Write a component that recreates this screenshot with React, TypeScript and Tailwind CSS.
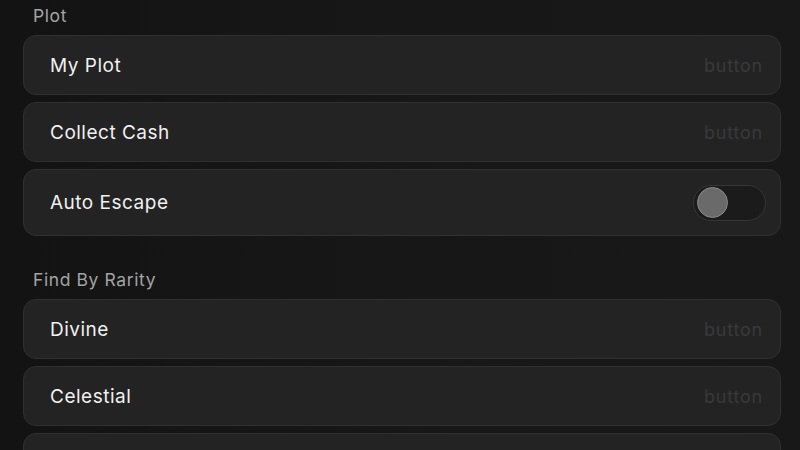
import { type FC } from 'react';

type Row = {
    label: string;
    kind: 'button' | 'toggle';
};

const sections: { title: string; rows: Row[] }[] = [
    {
        title: 'Plot',
        rows: [
            { label: 'My Plot', kind: 'button' },
            { label: 'Collect Cash', kind: 'button' },
            { label: 'Auto Escape', kind: 'toggle' },
        ],
    },
    {
        title: 'Find By Rarity',
        rows: [
            { label: 'Divine', kind: 'button' },
            { label: 'Celestial', kind: 'button' },
            { label: '', kind: 'button' },
        ],
    },
];

const Toggle: FC = () => (
    <div className="w-[73px] h-[36px] rounded-full bg-[#1b1b1b] border border-[#363636] flex items-center px-[3px]">
        <div className="w-[31px] h-[31px] rounded-full bg-[#6a6a6a] border border-[#8a8a8a]" />
    </div>
);

const Item: FC<{ row: Row }> = ({ row }) => (
    <div
        className={`flex items-center justify-between rounded-[13px] bg-[#232323] border border-[#303030] pl-[26px] ${
            row.kind === 'toggle' ? 'h-[67px] pr-[14px]' : 'h-[60px] pr-[17px]'
        }`}
    >
        <span className="pt-[2px] text-[19px] text-[#f0f0f0] tracking-[0.5px]">{row.label}</span>
        {row.kind === 'button' ? (
            row.label && <span className="text-[18px] text-[#393939] tracking-[0.8px]">button</span>
        ) : (
            <Toggle />
        )}
    </div>
);

export default function App() {
    return (
        <div
            className="w-[800px] h-[450px] overflow-hidden bg-gradient-to-r from-[#131313] via-[#171717] to-[#181818] pl-[23px] pr-[19px]"
            style={{ fontFamily: '"Inter", "Noto Sans", sans-serif' }}
        >
            {sections.map((section, idx) => (
                <div key={section.title} className={idx > 0 ? 'mt-[28px]' : ''}>
                    <h2 className="h-[35px] pl-[10px] pt-[3px] text-[17.5px] text-[#a3a3a3] tracking-[0.6px]">
                        {section.title}
                    </h2>
                    <div className="flex flex-col gap-[7px]">
                        {section.rows.map((row, i) => (
                            <Item key={`${row.label}-${i}`} row={row} />
                        ))}
                    </div>
                </div>
            ))}
        </div>
    );
}
